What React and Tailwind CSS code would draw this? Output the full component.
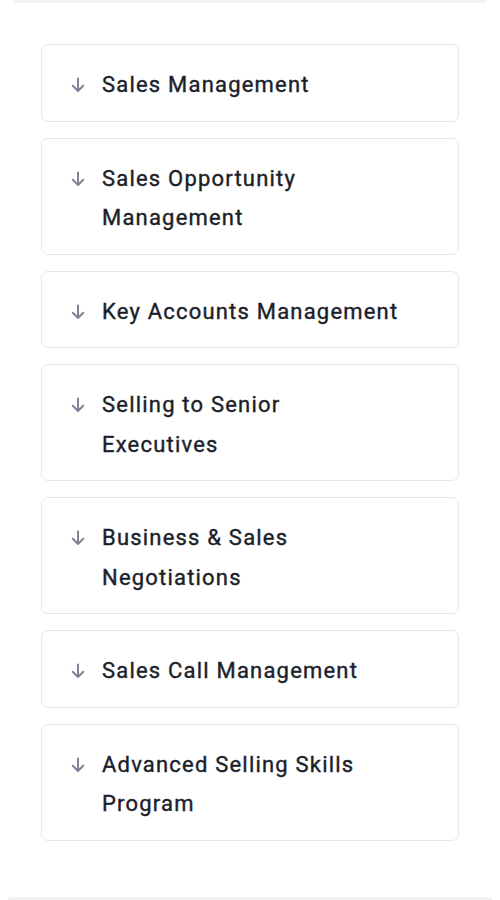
import React from "react";

const items = [
  "Sales Management",
  "Sales Opportunity Management",
  "Key Accounts Management",
  "Selling to Senior Executives",
  "Business & Sales Negotiations",
  "Sales Call Management",
  "Advanced Selling Skills Program",
];

function Arrow() {
  return (
    <svg width="14" height="16" viewBox="0 0 14 16" fill="none" className="shrink-0 mt-[12px]">
      <path d="M7 1.5V14M1.8 8.8L7 14L12.2 8.8" stroke="#7d8497" strokeWidth="2" strokeLinecap="round" strokeLinejoin="round" />
    </svg>
  );
}

export default function App() {
  return (
    <div className="w-[500px] h-[900px] bg-white flex flex-col overflow-hidden" style={{ fontFamily: "Roboto, 'Liberation Sans', sans-serif" }}>
      <div className="h-[3px] mx-[13px] bg-[#f2f3f4] rounded-b-[3px]" />
      <div className="flex flex-col gap-[16px] px-[41px] pt-[41px] flex-1">
        {items.map((t) => (
          <div key={t} className="flex items-start gap-[17px] border border-[#e6e8ec] rounded-[7px] pl-[29px] pr-[58px] pt-[20px] pb-[16px]">
            <Arrow />
            <span className="text-[22px] leading-[39.5px] font-normal text-[#1c1f2b] tracking-[1.2px] [-webkit-text-stroke:0.4px_#1c1f2b]">{t}</span>
          </div>
        ))}
      </div>
      <div className="h-[3px] mx-[8px] bg-[#f2f2f3] rounded-t-[4px]" />
    </div>
  );
}
